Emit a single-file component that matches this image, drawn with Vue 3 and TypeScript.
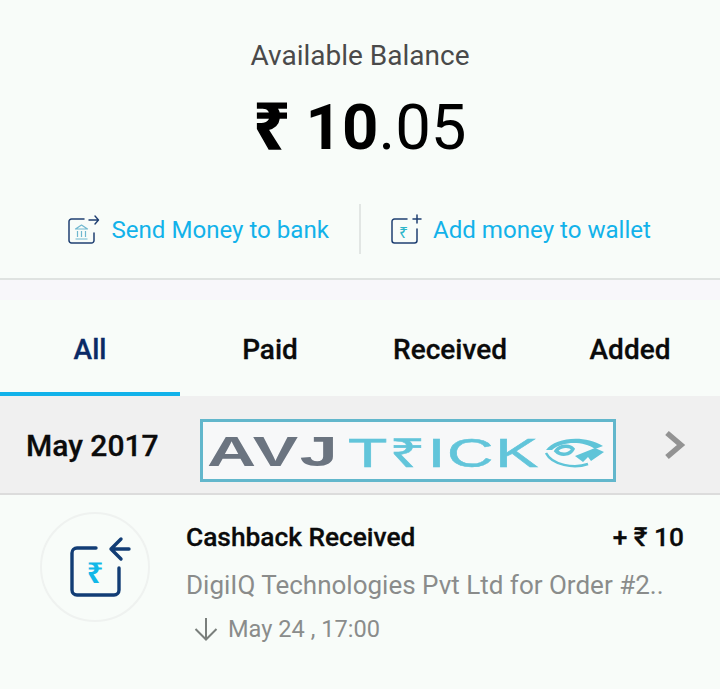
<script setup lang="ts">
const tabs: string[] = ['All', 'Paid', 'Received', 'Added']
</script>

<template>
  <div class="page">
    <section class="balance">
      <div class="label">Available Balance</div>
      <div class="amount"><span class="rs">₹</span> <b>10</b>.05</div>
      <div class="actions">
        <div class="action left">
          <svg width="32" height="32" viewBox="0 0 32 32" fill="none">
            <path d="M16 5H3.500a2.500 2.500 0 0 0-2.500 2.500V26.500A2.500 2.500 0 0 0 3.500 29H23.500a2.500 2.500 0 0 0 2.500-2.500V19" stroke="#1f3f72" stroke-width="1.500" stroke-linecap="round"/>
            <path d="M21 6h9M27 2l3.500 4-3.500 4" stroke="#1f3f72" stroke-width="1.400" stroke-linecap="round" stroke-linejoin="round"/>
            <path d="M7.500 15l6-4 6 4zM9.500 17v6M13.500 17v6M17.500 17v6M7.500 25h12" stroke="#6fb7cf" stroke-width="1.200" stroke-linejoin="round"/>
          </svg>
          <span>Send Money to bank</span>
        </div>
        <div class="divider"></div>
        <div class="action right">
          <svg width="32" height="32" viewBox="0 0 32 32" fill="none">
            <path d="M17 5H4.500A2.500 2.500 0 0 0 2 7.500V26.500A2.500 2.500 0 0 0 4.500 29H24.500A2.500 2.500 0 0 0 27 26.500V15" stroke="#1f3f72" stroke-width="1.500" stroke-linecap="round"/>
            <path d="M27 1v8M23 5h8" stroke="#1f3f72" stroke-width="1.500" stroke-linecap="round"/>
            <text x="13.500" y="24" class="mini-rs">₹</text>
          </svg>
          <span>Add money to wallet</span>
        </div>
      </div>
    </section>

    <div class="spacer"></div>

    <nav class="tabs">
      <div v-for="(t, i) in tabs" :key="t" class="tab" :class="{ active: i === 0 }">{{ t }}</div>
    </nav>

    <div class="month">
      <span class="month-name">May 2017</span>
      <div class="logo">
        <span class="avj">AVJ</span>
        <span class="trick">T₹ICK</span>
        <svg class="logo-mark" width="62" height="32" viewBox="0 0 62 32" fill="none">
          <path d="M3 14C12 2 40-2 60 10L52 13C40 5 20 5 9 14z" fill="#5fc4d8"/>
          <path d="M3 17c6 12 28 16 42 11" stroke="#5fc4d8" stroke-width="2.500"/>
          <path d="M13 15c4-6 14-6 17-2-3 6-12 7-17 2z" stroke="#5fc4d8" stroke-width="3.500"/>
          <path d="M32 20L52 12l9 4-13 9-3-4-5 5z" fill="#5fc4d8"/>
        </svg>
      </div>
      <svg class="chev" width="22" height="30" viewBox="0 0 22 30" fill="none">
        <path d="M3 3L17 15 3 27" stroke="#939393" stroke-width="5.500"/>
      </svg>
    </div>

    <div class="row">
      <div class="circle">
        <svg width="110" height="110" viewBox="0 0 110 110" fill="none">
          <path d="M56 36H37a5 5 0 0 0-5 5V78a5 5 0 0 0 5 5H74a5 5 0 0 0 5-5V56" stroke="#123d75" stroke-width="3.400" stroke-linecap="round"/>
          <path d="M89 37H71M81 27L71 37l10 10" stroke="#123d75" stroke-width="3.400" stroke-linecap="round" stroke-linejoin="round"/>
          <text x="55" y="71" class="rs-big">₹</text>
        </svg>
      </div>
      <div class="info">
        <div class="head">
          <span class="title">Cashback Received</span>
          <span class="value">+ ₹ 10</span>
        </div>
        <div class="desc">DigiIQ Technologies Pvt Ltd for Order #2..</div>
        <div class="when">
          <svg width="26" height="26" viewBox="0 0 26 26" fill="none">
            <path d="M13 2v21M2.500 13L13 23.500 23.500 13" stroke="#7a7f7c" stroke-width="2"/>
          </svg>
          <span>May 24 , 17:00</span>
        </div>
      </div>
    </div>
  </div>
</template>

<style scoped>
.page {
  width: 720px;
  height: 689px;
  overflow: hidden;
  background: #f8fcf9;
  font-family: Roboto, "Noto Sans", sans-serif;
  display: flex;
  flex-direction: column;
}
.balance {
  height: 280px;
  box-sizing: border-box;
  border-bottom: 2px solid #dfe3e1;
  display: flex;
  flex-direction: column;
  align-items: center;
  padding-top: 40px;
}
.label {
  font-size: 28px;
  line-height: 32px;
  color: #4a4a4a;
}
.amount {
  margin-top: 14px;
  font-size: 63.500px;
  line-height: 78px;
  color: #000;
  font-weight: 400;
}
.amount b { font-weight: 700; }
.rs { font-weight: 700; font-family: "Noto Sans", "DejaVu Sans", sans-serif; -webkit-text-stroke: 1.500px #000; }
.actions {
  margin-top: 37px;
  display: flex;
  align-items: center;
  height: 50px;
  width: 100%;
}
.action {
  display: flex;
  align-items: center;
  color: #12b2ea;
  font-size: 24.100px;
  padding-top: 2px;
}
.action.left { width: 359px; justify-content: flex-end; padding-right: 30px; box-sizing: border-box; gap: 11px; }
.action.right { padding-left: 29px; gap: 11px; }
.divider { width: 2px; height: 50px; background: #e2e6e4; }
.mini-rs { font-size: 16px; fill: #2bb5c9; text-anchor: middle; font-family: "Noto Sans", sans-serif; }
.spacer { height: 20px; background: #f8f7fa; }
.tabs { display: flex; height: 96px; }
.tab {
  width: 180px;
  box-sizing: border-box;
  padding-top: 33px;
  text-align: center;
  font-size: 28px;
  font-weight: 500;
  color: #0b0b0b;
  -webkit-text-stroke: 0.300px currentColor;
}
.tab.active { color: #0a2a66; border-bottom: 4px solid #12b2ea; }
.month {
  height: 99px;
  box-sizing: border-box;
  background: #f0f0f0;
  border-bottom: 2px solid #dcdcdc;
  display: flex;
  align-items: center;
  padding-left: 26px;
}
.month-name { font-size: 30px; font-weight: 500; color: #0b0b0b; width: 174px; -webkit-text-stroke: 0.300px currentColor; padding-top: 2px; }
.logo {
  width: 416px;
  height: 63px;
  box-sizing: border-box;
  border: 3px solid #62b7cc;
  background: #f7f8f9;
  display: flex;
  align-items: center;
  padding: 3px 0 0 4px;
  margin-top: 11px;
  position: relative;
  overflow: hidden;
  font-family: "Liberation Sans", sans-serif;
}
.avj { font-size: 42px; font-weight: 700; color: #6b7480; letter-spacing: 1px; transform: scaleX(1.620); transform-origin: left center; width: 141px; }
.trick { font-size: 40px; color: #62c5da; letter-spacing: 1px; transform: scaleX(1.610); transform-origin: left center; -webkit-text-stroke: 0.500px #62c5da; }
.logo-mark { position: absolute; right: 8px; top: 14px; }
.chev { margin-left: 48px; }
.row { display: flex; padding-top: 17px; }
.circle {
  width: 110px;
  height: 110px;
  box-sizing: border-box;
  border: 2px solid #eff2f0;
  border-radius: 50%;
  margin-left: 40px;
  display: flex;
  align-items: center;
  justify-content: center;
  flex: none;
}
.circle svg { flex: none; }
.rs-big { font-size: 29px; font-weight: 700; fill: #12b8e8; text-anchor: middle; font-family: "Noto Sans", sans-serif; }
.info { margin-left: 36px; width: 498px; }
.head { display: flex; justify-content: space-between; font-size: 26.300px; font-weight: 500; color: #0b0b0b; line-height: 30px; margin-top: 10px; -webkit-text-stroke: 0.300px currentColor; }
.desc { margin-top: 18px; font-size: 26px; line-height: 30px; color: #8a8c8b; white-space: nowrap; }
.when { margin-top: 15px; display: flex; align-items: center; gap: 9px; font-size: 23.600px; color: #8a8c8b; padding-left: 7px; }
</style>
